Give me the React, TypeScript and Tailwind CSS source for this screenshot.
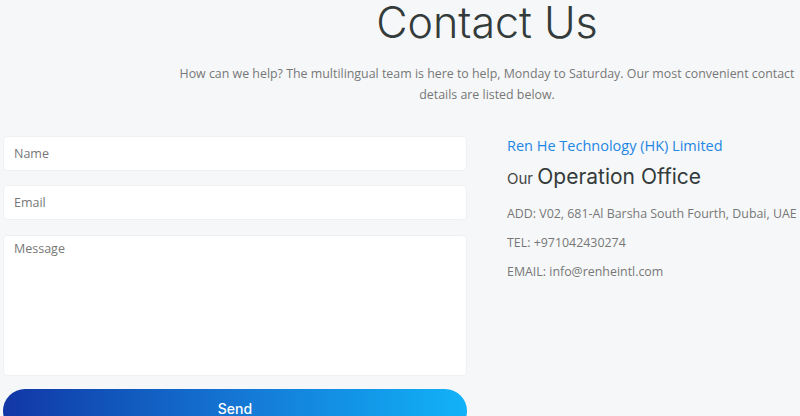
export default function App() {
  const body = { fontFamily: '"Open Sans", "Liberation Sans", sans-serif' };
  const geo = { fontFamily: 'Inter, "Open Sans", sans-serif' };

  return (
    <div className="w-[800px] h-[416px] overflow-hidden bg-[#f6f7f9]" style={body}>
      {/* heading */}
      <div className="pl-[174px] text-center">
        <h1 className="text-[43px] leading-[44px] font-light text-[#333b3b]" style={geo}>
          Contact Us
        </h1>
        <p className="mt-[19px] text-[12.4px] leading-[21px] text-[#777]">
          How can we help? The multilingual team is here to help, Monday to Saturday. Our most convenient contact
          details are listed below.
        </p>
      </div>

      {/* form + office */}
      <div className="flex mt-[31px] pl-[3px]">
        <form className="w-[464px] shrink-0 flex flex-col">
          <input
            placeholder="Name"
            className="h-[35px] rounded-[4px] border border-[#eef0f2] bg-white px-[10px] text-[12.5px] text-[#555] placeholder:text-[#777] outline-none"
          />
          <input
            placeholder="Email"
            className="mt-[14px] h-[35px] rounded-[4px] border border-[#eef0f2] bg-white px-[10px] text-[12.5px] text-[#555] placeholder:text-[#777] outline-none"
          />
          <textarea
            placeholder="Message"
            className="mt-[15px] h-[141px] resize-none rounded-[4px] border border-[#eef0f2] bg-white px-[10px] py-[4px] text-[12.5px] text-[#555] placeholder:text-[#777] outline-none"
          />
          <button
            type="button"
            className="mt-[13px] h-[44px] rounded-full bg-gradient-to-r from-[#1236a5] via-[#1576d3] to-[#12b2f8] text-white text-[14px] font-medium pb-[6px]"
            style={geo}
          >
            Send
          </button>
        </form>

        <div className="ml-[40px] whitespace-nowrap">
          <div className="text-[14.5px] leading-[20px] text-[#1e86e3]">Ren He Technology (HK) Limited</div>
          <div className="mt-[8px] text-[#333b3b]" style={geo}>
            <span className="text-[15px] text-[#444]">Our </span>
            <span className="text-[21px] leading-[26px]">Operation Office</span>
          </div>
          <div className="mt-[13px] flex flex-col gap-[10px] text-[12.4px] leading-[19px] text-[#777]">
            <div>ADD: V02, 681-Al Barsha South Fourth, Dubai, UAE</div>
            <div>TEL: +971042430274</div>
            <div>EMAIL: info@renheintl.com</div>
          </div>
        </div>
      </div>
    </div>
  );
}
